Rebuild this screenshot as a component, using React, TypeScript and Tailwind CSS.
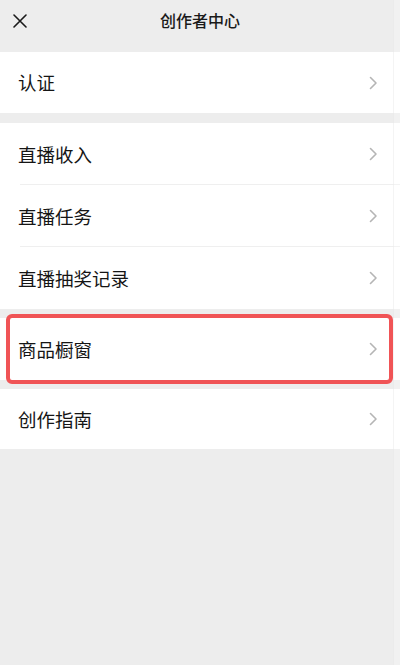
import React from "react";

const font = { fontFamily: '"Noto Sans CJK SC", "Noto Sans", sans-serif' };

function Chevron() {
  return (
    <svg width="9" height="14" viewBox="0 0 9 14" fill="none" className="shrink-0">
      <path d="M1.5 1.5 L7 7 L1.5 12.5" stroke="#b5b5b5" strokeWidth="1.6" strokeLinecap="round" strokeLinejoin="round" />
    </svg>
  );
}

function Row({ label, h, divider }: { label: string; h: string; divider?: boolean }) {
  return (
    <div className={`relative flex items-center justify-between bg-white pl-[18px] pr-[22px] ${h}`}>
      <span className="text-[18.5px] text-[#151515] leading-none">{label}</span>
      <Chevron />
      {divider && <div className="absolute bottom-0 left-[20px] right-0 h-px bg-[#efefef]" />}
    </div>
  );
}

export default function App() {
  return (
    <div className="relative w-[400px] h-[665px] bg-[#ededed] overflow-hidden" style={font}>
      <div className="h-[52px] flex items-start pt-[10px]">
        <div className="relative w-full h-[20px] flex items-center justify-center">
          <svg width="14" height="14" viewBox="0 0 14 14" className="absolute left-[13px] top-[4px]">
            <path d="M1 1 L13 13 M13 1 L1 13" stroke="#1a1a1a" strokeWidth="1.6" strokeLinecap="round" />
          </svg>
          <span className="text-[16px] font-medium text-[#1a1a1a]">创作者中心</span>
        </div>
      </div>
      <Row label="认证" h="h-[61px]" />
      <div className="h-[10px]" />
      <Row label="直播收入" h="h-[62px]" divider />
      <Row label="直播任务" h="h-[62px]" divider />
      <Row label="直播抽奖记录" h="h-[62px]" />
      <div className="h-[9px]" />
      <div className="relative">
        <Row label="商品橱窗" h="h-[62px]" />
        <div className="absolute left-[6px] right-[7px] top-[-4px] bottom-[-4px] border-[4px] border-[#f05456] rounded-[6px]" />
      </div>
      <div className="h-[9px]" />
      <Row label="创作指南" h="h-[60px]" />
      <div className="absolute right-0 top-0 w-[7px] h-full bg-white/25 border-l border-[#e4e4e4]/40" />
    </div>
  );
}
